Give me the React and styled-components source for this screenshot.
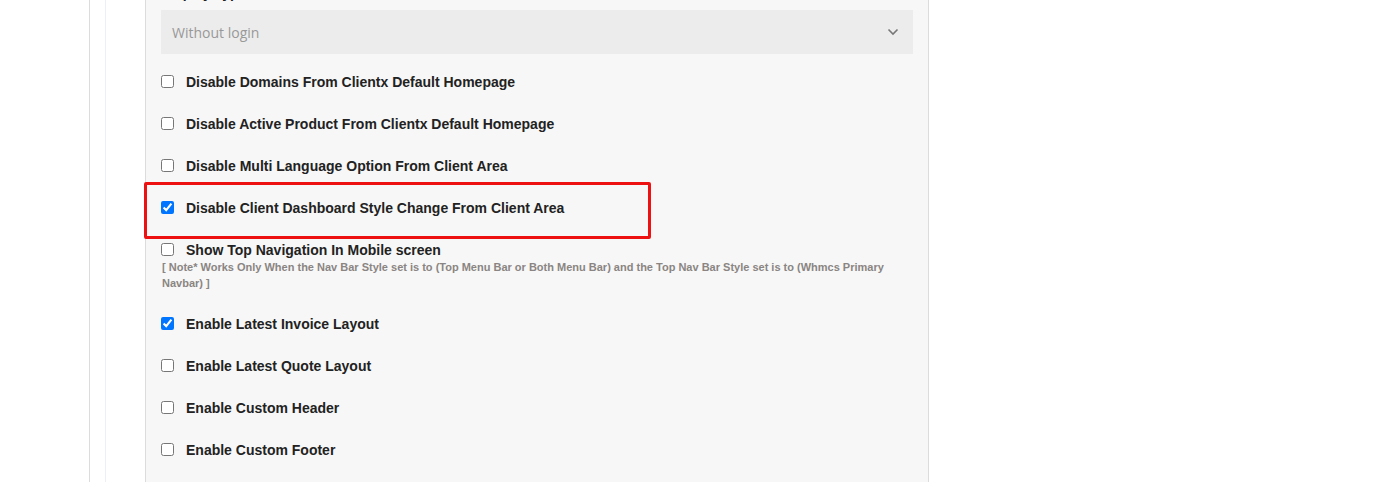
import styled, { createGlobalStyle } from "styled-components";

const GlobalStyle = createGlobalStyle`
  html, body {
    margin: 0;
    padding: 0;
    background: #fff;
    height: 100%;
    overflow: hidden;
  }
  #root {
    height: 100%;
  }
`;

const Page = styled.div`
  display: flex;
  height: 482px;
  overflow: hidden;
  font-family: "Liberation Sans", Arial, sans-serif;
`;

const Rail = styled.div`
  width: 89px;
  flex-shrink: 0;
  border-right: 1px solid #dcdcdc;
`;

const Content = styled.div`
  margin-left: 15px;
  padding-left: 39px;
  border-left: 1px solid #eceff5;
  display: flex;
`;

const Panel = styled.div`
  width: 784px;
  box-sizing: border-box;
  background: #f7f7f7;
  border-left: 1px solid #dcdcdc;
  border-right: 1px solid #dcdcdc;
  padding: 0 15px;
  margin-top: -17px;
`;

const FieldLabel = styled.div`
  font-size: 14px;
  font-weight: 700;
  color: #222;
  line-height: 20px;
  margin-bottom: 7px;
`;

const SelectBox = styled.div`
  height: 44px;
  background: #ececec;
  display: flex;
  align-items: center;
  justify-content: space-between;
  padding: 0 14px 0 11px;
  font-family: "Open Sans", sans-serif;
  font-size: 14px;
  color: #999;
`;

const List = styled.div`
  margin-top: 7px;
  display: flex;
  flex-direction: column;
`;

const Row = styled.label`
  position: relative;
  display: flex;
  height: ${(p) => (p.$withNote ? "auto" : "42px")};
  padding-top: ${(p) => (p.$withNote ? "13px" : "0")};
  padding-bottom: ${(p) => (p.$withNote ? "12px" : "0")};
  flex-direction: ${(p) => (p.$withNote ? "column" : "row")};
  align-items: ${(p) => (p.$withNote ? "stretch" : "center")};
`;

const Line = styled.div`
  display: flex;
  align-items: center;
`;

const Box = styled.input`
  width: 13px;
  height: 13px;
  margin: 0 12px 0 0;
  flex-shrink: 0;
  accent-color: #0075ff;
  position: relative;
  top: -1px;
`;

const Text = styled.span`
  font-size: 14px;
  font-weight: 700;
  color: #222;
`;

const Note = styled.div`
  font-size: 11px;
  font-weight: 700;
  color: #8a8582;
  line-height: 16px;
  margin-top: 1px;
  padding-left: 1px;
`;

const Highlight = styled.div`
  position: absolute;
  left: -17px;
  top: -5px;
  width: 507px;
  height: 57px;
  box-sizing: border-box;
  border: 3px solid #ee1111;
  border-radius: 2px;
  pointer-events: none;
`;

const Chevron = () => (
  <svg width="12" height="8" viewBox="0 0 12 8" fill="none">
    <path d="M1.5 1.5 6 6l4.5-4.5" stroke="#777" strokeWidth="1.6" />
  </svg>
);

const options = [
  { label: "Disable Domains From Clientx Default Homepage" },
  { label: "Disable Active Product From Clientx Default Homepage" },
  { label: "Disable Multi Language Option From Client Area" },
  { label: "Disable Client Dashboard Style Change From Client Area", checked: true, marked: true },
  {
    label: "Show Top Navigation In Mobile screen",
    note: "[ Note* Works Only When the Nav Bar Style set is to (Top Menu Bar or Both Menu Bar) and the Top Nav Bar Style set is to (Whmcs Primary Navbar) ]",
  },
  { label: "Enable Latest Invoice Layout", checked: true },
  { label: "Enable Latest Quote Layout" },
  { label: "Enable Custom Header" },
  { label: "Enable Custom Footer" },
];

export default function App() {
  return (
    <>
      <GlobalStyle />
      <Page>
        <Rail />
        <Content>
          <Panel>
            <FieldLabel>Display Type</FieldLabel>
            <SelectBox>
              <span>Without login</span>
              <Chevron />
            </SelectBox>
            <List>
              {options.map((o) =>
                o.note ? (
                  <Row key={o.label} $withNote>
                    <Line>
                      <Box type="checkbox" defaultChecked={!!o.checked} />
                      <Text>{o.label}</Text>
                    </Line>
                    <Note>{o.note}</Note>
                  </Row>
                ) : (
                  <Row key={o.label}>
                    <Box type="checkbox" defaultChecked={!!o.checked} />
                    <Text>{o.label}</Text>
                    {o.marked && <Highlight />}
                  </Row>
                )
              )}
            </List>
          </Panel>
        </Content>
      </Page>
    </>
  );
}
